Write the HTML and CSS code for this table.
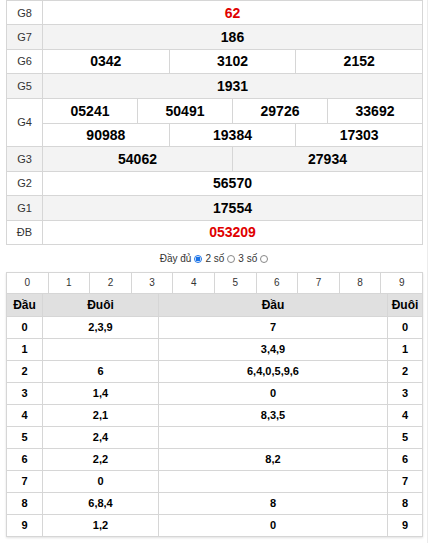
FILE: index.html
```html
<!DOCTYPE html>
<html lang="vi">
<head>
<meta charset="utf-8">
<link rel="stylesheet" href="styles.css">
</head>
<body>
<div class="page">
  <div class="kq">
    <div class="row">
      <div class="lbl">G8</div>
      <div class="vals"><div class="v red">62</div></div>
    </div>
    <div class="row alt">
      <div class="lbl">G7</div>
      <div class="vals"><div class="v">186</div></div>
    </div>
    <div class="row">
      <div class="lbl">G6</div>
      <div class="vals"><div class="v">0342</div><div class="v">3102</div><div class="v">2152</div></div>
    </div>
    <div class="row alt">
      <div class="lbl">G5</div>
      <div class="vals"><div class="v">1931</div></div>
    </div>
    <div class="row">
      <div class="lbl">G4</div>
      <div class="vals stack">
        <div class="sub"><div class="v">05241</div><div class="v">50491</div><div class="v">29726</div><div class="v">33692</div></div>
        <div class="sub"><div class="v">90988</div><div class="v">19384</div><div class="v">17303</div></div>
      </div>
    </div>
    <div class="row alt">
      <div class="lbl">G3</div>
      <div class="vals"><div class="v">54062</div><div class="v">27934</div></div>
    </div>
    <div class="row">
      <div class="lbl">G2</div>
      <div class="vals"><div class="v">56570</div></div>
    </div>
    <div class="row alt">
      <div class="lbl">G1</div>
      <div class="vals"><div class="v">17554</div></div>
    </div>
    <div class="row">
      <div class="lbl">ĐB</div>
      <div class="vals"><div class="v red">053209</div></div>
    </div>
  </div>

  <div class="opts">
    <span>Đầy đủ</span><span class="radio on"></span><span>2 số</span><span class="radio"></span><span>3 số</span><span class="radio"></span>
  </div>

  <div class="lt">
    <div class="digits">
      <div>0</div><div>1</div><div>2</div><div>3</div><div>4</div><div>5</div><div>6</div><div>7</div><div>8</div><div>9</div>
    </div>
    <div class="grid head">
      <div>Đầu</div><div>Đuôi</div><div>Đầu</div><div>Đuôi</div>
    </div>
    <div class="grid"><div>0</div><div>2,3,9</div><div>7</div><div>0</div></div>
    <div class="grid"><div>1</div><div></div><div>3,4,9</div><div>1</div></div>
    <div class="grid"><div>2</div><div>6</div><div>6,4,0,5,9,6</div><div>2</div></div>
    <div class="grid"><div>3</div><div>1,4</div><div>0</div><div>3</div></div>
    <div class="grid"><div>4</div><div>2,1</div><div>8,3,5</div><div>4</div></div>
    <div class="grid"><div>5</div><div>2,4</div><div></div><div>5</div></div>
    <div class="grid"><div>6</div><div>2,2</div><div>8,2</div><div>6</div></div>
    <div class="grid"><div>7</div><div>0</div><div></div><div>7</div></div>
    <div class="grid"><div>8</div><div>6,8,4</div><div>8</div><div>8</div></div>
    <div class="grid"><div>9</div><div>1,2</div><div>0</div><div>9</div></div>
  </div>
</div>
</body>
</html>
```

FILE: styles.css
```css
* { box-sizing: border-box; }
html, body { margin: 0; padding: 0; background: #fff; }
body {
  font-family: "Liberation Sans", Arial, sans-serif;
  color: #000;
}
.page {
  width: 428px;
  height: 543px;
  padding-left: 6px;
  border-right: 1px solid #ececec;
}
.kq {
  width: 417px;
  border-top: 1px solid #d6d6d6;
  border-left: 1px solid #d6d6d6;
}
.row {
  display: flex;
  min-height: 24.4px;
  border-bottom: 1px solid #d6d6d6;
}
.row.alt { background: #f3f3f3; }
.lbl {
  width: 36px;
  flex: none;
  border-right: 1px solid #d6d6d6;
  display: flex;
  align-items: center;
  justify-content: center;
  font-size: 11px;
  color: #333;
}
.vals {
  flex: 1;
  display: flex;
}
.vals.stack { flex-direction: column; }
.sub {
  display: flex;
  height: 24.4px;
}
.sub + .sub { border-top: 1px solid #d6d6d6; height: 23.4px; }
.stack .sub:first-child { height: 24.4px; }
.v {
  flex: 1;
  display: flex;
  align-items: center;
  justify-content: center;
  border-right: 1px solid #d6d6d6;
  font-size: 14px;
  font-weight: bold;
}
.v + .v { border-left: 0; }
.v.red { color: #e00000; }
.opts {
  width: 417px;
  height: 27px;
  display: flex;
  align-items: center;
  justify-content: center;
  font-size: 10px;
  color: #333;
  gap: 2px;
  padding-top: 1px;
}
.radio {
  width: 8px;
  height: 8px;
  border-radius: 50%;
  border: 1px solid #888;
  background: #fff;
  display: inline-block;
  margin: 0 1px;
}
.radio.on {
  border: 1px solid #1a73e8;
  background: radial-gradient(circle, #1a73e8 0 2.2px, #fff 2.6px);
}
.lt {
  width: 417px;
  border-left: 1px solid #d6d6d6;
  border-top: 1px solid #d6d6d6;
  box-shadow: 0 1px 2px rgba(0,0,0,0.12);
}
.digits {
  display: grid;
  grid-template-columns: repeat(10, 1fr);
  height: 21px;
  border-bottom: 1px solid #d6d6d6;
}
.digits div {
  border-right: 1px solid #d6d6d6;
  display: flex;
  align-items: center;
  justify-content: center;
  font-size: 10px;
  color: #333;
}
.grid {
  display: grid;
  grid-template-columns: 36px 116px 229px 35px;
  height: 22px;
  border-bottom: 1px solid #d6d6d6;
}
.grid div {
  border-right: 1px solid #d6d6d6;
  display: flex;
  align-items: center;
  justify-content: center;
  font-size: 11px;
  font-weight: bold;
}
.grid.head {
  height: 23px;
  background: #e0e0e0;
}
.grid.head div { font-size: 12px; }
```
